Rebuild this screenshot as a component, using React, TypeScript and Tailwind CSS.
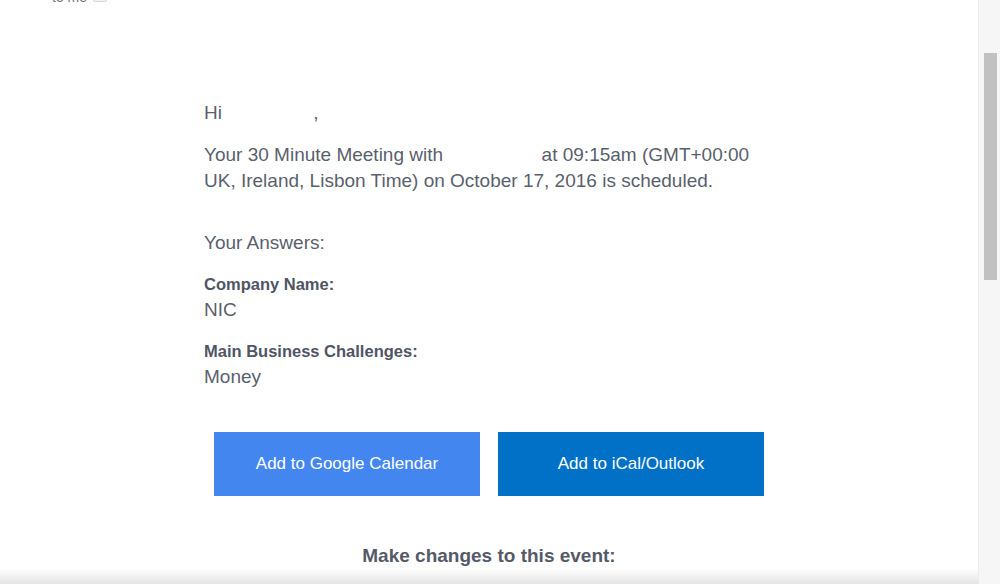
import React from "react";

export default function App() {
  return (
    <div className="w-[1000px] h-[584px] flex overflow-hidden bg-white font-['Liberation_Sans',Arial,sans-serif]">
      <div className="relative flex-1 overflow-hidden">
        <div className="-mt-[12px] pl-[52px] flex items-center gap-[6px] h-[18px] text-[14px] leading-[18px] text-[#777]">
          <span>to me</span>
          <span className="w-[14px] h-[9px] rounded-[2px] border border-[#d6d6d6] bg-[#f4f4f4]" />
        </div>
        <div className="w-[570px] mx-auto pt-[94px] text-[#5a5f6d]">
          <p className="text-[19px] leading-[26px]">
            Hi <span className="inline-block w-[86px]" />,
          </p>
          <p className="mt-[16px] text-[19px] leading-[26px]">
            Your 30 Minute Meeting with <span className="inline-block w-[88px]" /> at 09:15am (GMT+00:00
            <br />
            UK, Ireland, Lisbon Time) on October 17, 2016 is scheduled.
          </p>
          <p className="mt-[36px] text-[19px] leading-[26px]">Your Answers:</p>
          <div className="mt-[19px]">
            <div className="text-[16.5px] leading-[18px] font-bold text-[#505564]">Company Name:</div>
            <div className="mt-[4px] text-[19px] leading-[26px]">NIC</div>
          </div>
          <div className="mt-[19px]">
            <div className="text-[16.5px] leading-[18px] font-bold text-[#505564]">Main Business Challenges:</div>
            <div className="mt-[4px] text-[19px] leading-[26px]">Money</div>
          </div>
          <div className="mt-[42px] flex justify-center gap-[18px]">
            <div className="w-[266px] h-[64px] flex items-center justify-center bg-[#4486f0] text-white text-[17px]">
              Add to Google Calendar
            </div>
            <div className="w-[266px] h-[64px] flex items-center justify-center bg-[#0071c7] text-white text-[17px]">
              Add to iCal/Outlook
            </div>
          </div>
          <p className="mt-[47px] text-center text-[19px] leading-[26px] font-bold text-[#555a68]">
            Make changes to this event:
          </p>
        </div>
        <div className="absolute left-0 right-0 bottom-0 h-[16px] bg-gradient-to-b from-[#ffffff00] to-[#e4e4e4]" />
      </div>
      <div className="w-[22px] h-full bg-[#f6f6f6] border-l border-[#ececec] pt-[53px] pl-[5px]">
        <div className="w-[13px] h-[227px] bg-[#c1c1c1]" />
      </div>
    </div>
  );
}
